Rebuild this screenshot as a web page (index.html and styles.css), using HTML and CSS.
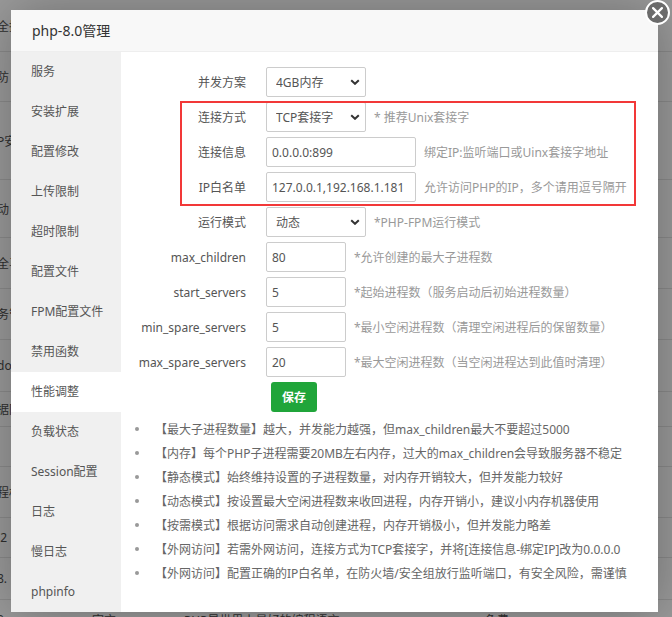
FILE: index.html
```html
<!DOCTYPE html>
<html lang="zh-CN">
<head>
<meta charset="utf-8">
<title>php-8.0管理</title>
<link rel="stylesheet" href="styles.css">
</head>
<body>
<div class="page">
  <div class="bg-row"><span class="c1">全捷</span><span></span><span></span><span></span></div>
  <div class="bg-row"><span class="c1">防</span><span></span><span></span><span></span></div>
  <div class="bg-row"><span class="c1">P安</span><span></span><span></span><span></span></div>
  <div class="bg-row"><span class="c1">动</span><span></span><span></span><span></span></div>
  <div class="bg-row"><span class="c1">全马</span><span></span><span></span><span></span></div>
  <div class="bg-row"><span class="c1">务管</span><span></span><span></span><span></span></div>
  <div class="bg-row"><span class="c1">do</span><span></span><span></span><span></span></div>
  <div class="bg-row"><span class="c1">据同</span><span></span><span></span><span></span></div>
  <div class="bg-row"><span class="c1"></span><span></span><span></span><span></span></div>
  <div class="bg-row"><span class="c1">程权</span><span></span><span></span><span></span></div>
  <div class="bg-row"><span class="c1">.2</span><span></span><span></span><span></span></div>
  <div class="bg-row"><span class="c1">8.</span><span></span><span></span><span></span></div>
  <div class="bg-row"><span class="c1">0</span><span>官方</span><span>PHP是世界上最好的编程语言</span><span>免费</span></div>
</div>

<div class="layer">
  <div class="layer-title">php-8.0管理</div>
  <a class="layer-close" href="#" aria-label="关闭">
    <svg viewBox="0 0 10 10" width="11" height="11"><path d="M1 1 L9 9 M9 1 L1 9" stroke="#fff" stroke-width="2" stroke-linecap="round" fill="none"/></svg>
  </a>
  <div class="layer-body">
    <div class="menu">
      <p>服务</p>
      <p>安装扩展</p>
      <p>配置修改</p>
      <p>上传限制</p>
      <p>超时限制</p>
      <p>配置文件</p>
      <p>FPM配置文件</p>
      <p>禁用函数</p>
      <p class="active">性能调整</p>
      <p>负载状态</p>
      <p>Session配置</p>
      <p>日志</p>
      <p>慢日志</p>
      <p>phpinfo</p>
    </div>
    <div class="content">
      <div class="row">
        <span class="label">并发方案</span>
        <div class="select-wrap">
          <select><option>4GB内存</option></select>
          <svg class="chev" viewBox="0 0 10 6" width="10" height="6"><path d="M1.2 1.2 L5 4.8 L8.8 1.2" stroke="#333" stroke-width="2" fill="none"/></svg>
        </div>
      </div>
      <div class="row">
        <span class="label">连接方式</span>
        <div class="select-wrap">
          <select><option>TCP套接字</option></select>
          <svg class="chev" viewBox="0 0 10 6" width="10" height="6"><path d="M1.2 1.2 L5 4.8 L8.8 1.2" stroke="#333" stroke-width="2" fill="none"/></svg>
        </div>
        <span class="hint">* 推荐Unix套接字</span>
      </div>
      <div class="row">
        <span class="label">连接信息</span>
        <input class="text w150" type="text" value="0.0.0.0:899">
        <span class="hint">绑定IP:监听端口或Uinx套接字地址</span>
      </div>
      <div class="row">
        <span class="label">IP白名单</span>
        <input class="text w150" type="text" value="127.0.0.1,192.168.1.181">
        <span class="hint">允许访问PHP的IP，多个请用逗号隔开</span>
      </div>
      <div class="row">
        <span class="label">运行模式</span>
        <div class="select-wrap">
          <select><option>动态</option></select>
          <svg class="chev" viewBox="0 0 10 6" width="10" height="6"><path d="M1.2 1.2 L5 4.8 L8.8 1.2" stroke="#333" stroke-width="2" fill="none"/></svg>
        </div>
        <span class="hint">*PHP-FPM运行模式</span>
      </div>
      <div class="row">
        <span class="label">max_children</span>
        <input class="text w80" type="text" value="80">
        <span class="hint">*允许创建的最大子进程数</span>
      </div>
      <div class="row">
        <span class="label">start_servers</span>
        <input class="text w80" type="text" value="5">
        <span class="hint">*起始进程数（服务启动后初始进程数量）</span>
      </div>
      <div class="row">
        <span class="label">min_spare_servers</span>
        <input class="text w80" type="text" value="5">
        <span class="hint">*最小空闲进程数（清理空闲进程后的保留数量）</span>
      </div>
      <div class="row">
        <span class="label">max_spare_servers</span>
        <input class="text w80" type="text" value="20">
        <span class="hint">*最大空闲进程数（当空闲进程达到此值时清理）</span>
      </div>
      <div class="btn-row">
        <button class="btn" type="button">保存</button>
      </div>
      <ul class="tips">
        <li>【最大子进程数量】越大，并发能力越强，但max_children最大不要超过5000</li>
        <li>【内存】每个PHP子进程需要20MB左右内存，过大的max_children会导致服务器不稳定</li>
        <li>【静态模式】始终维持设置的子进程数量，对内存开销较大，但并发能力较好</li>
        <li>【动态模式】按设置最大空闲进程数来收回进程，内存开销小，建议小内存机器使用</li>
        <li>【按需模式】根据访问需求自动创建进程，内存开销极小，但并发能力略差</li>
        <li>【外网访问】若需外网访问，连接方式为TCP套接字，并将[连接信息-绑定IP]改为0.0.0.0</li>
        <li>【外网访问】配置正确的IP白名单，在防火墙/安全组放行监听端口，有安全风险，需谨慎</li>
      </ul>
    </div>
  </div>
</div>

<div class="mark"></div>
</body>
</html>
```

FILE: styles.css
```css
* {
  box-sizing: border-box;
}

html, body {
  margin: 0;
  padding: 0;
}

body {
  width: 672px;
  height: 617px;
  overflow: hidden;
  position: relative;
  background: #9b9b9b;
  font-family: "Noto Sans", "Noto Sans CJK SC", sans-serif;
  font-size: 12px;
}

/* dimmed page behind the dialog */
.page {
  width: 672px;
}

.bg-row {
  display: grid;
  grid-template-columns: 92px 92px 301px 1fr;
  align-items: center;
  border-bottom: 1px solid #8b8b8b;
  color: #2f2f2f;
  font-size: 12px;
  white-space: nowrap;
}

.bg-row:nth-child(1) { height: 52px; }
.bg-row:nth-child(2) { height: 50px; }
.bg-row:nth-child(3) { height: 78px; }
.bg-row:nth-child(4) { height: 58px; }
.bg-row:nth-child(5) { height: 51px; }
.bg-row:nth-child(6) { height: 51px; }
.bg-row:nth-child(7) { height: 52px; }
.bg-row:nth-child(8) { height: 35px; }
.bg-row:nth-child(9) { height: 40px; }
.bg-row:nth-child(10) { height: 51px; }
.bg-row:nth-child(11) { height: 40px; }
.bg-row:nth-child(12) { height: 42px; }
.bg-row:nth-child(13) { height: 40px; }

.c1 {
  width: 11px;
  overflow: hidden;
  text-indent: -3px;
}

/* dialog */
.layer {
  position: absolute;
  left: 11px;
  top: 10px;
  width: 647px;
  height: 602px;
  background: #fff;
  box-shadow: 1px 1px 50px rgba(0, 0, 0, 0.3);
  display: flex;
  flex-direction: column;
}

.layer-title {
  height: 42px;
  line-height: 41px;
  padding-left: 21px;
  background: #f8f8f8;
  border-bottom: 1px solid #eee;
  color: #333;
  font-size: 14px;
}

.layer-close {
  position: absolute;
  right: -12px;
  top: -10px;
  width: 25px;
  height: 25px;
  border-radius: 50%;
  background: #6b6b6b;
  border: 2px solid #fff;
  display: flex;
  align-items: center;
  justify-content: center;
}

.layer-body {
  flex: 1;
  display: flex;
  min-height: 0;
}

.menu {
  width: 110px;
  background: #f0f0f0;
}

.menu p {
  margin: 0;
  height: 40px;
  line-height: 40px;
  padding-left: 20px;
  color: #555;
  white-space: nowrap;
}

.menu p.active {
  background: #fff;
}

.content {
  flex: 1;
  padding: 15px 0 0 15px;
}

.row {
  display: flex;
  align-items: center;
  height: 30px;
  margin-bottom: 5px;
  white-space: nowrap;
}

.label {
  width: 130px;
  padding-right: 20px;
  text-align: right;
  color: #555;
  flex: none;
}

.select-wrap {
  position: relative;
  width: 100px;
  height: 30px;
  flex: none;
}

.select-wrap select {
  -webkit-appearance: none;
  appearance: none;
  width: 100%;
  height: 100%;
  border: 1px solid #ccc;
  border-radius: 2px;
  padding: 0 0 0 9px;
  background: #fff;
  color: #555;
  font: inherit;
}

.chev {
  position: absolute;
  right: 6px;
  top: 12px;
  pointer-events: none;
}

.text {
  height: 30px;
  border: 1px solid #ccc;
  border-radius: 2px;
  padding: 0 5px;
  color: #555;
  font: inherit;
  flex: none;
}

.w150 { width: 150px; }
.w80 { width: 80px; }

.hint {
  margin-left: 8px;
  color: #999;
}

.btn-row {
  height: 30px;
  padding-left: 135px;
}

.btn {
  width: 46px;
  height: 30px;
  border: 0;
  border-radius: 3px;
  background: #20a53a;
  color: #fff;
  font: inherit;
  font-weight: bold;
  padding: 0;
}

.tips {
  list-style: none;
  margin: 5px 0 0 0;
  padding: 0;
}

.tips li {
  display: flex;
  align-items: center;
  height: 24px;
  color: #666;
  white-space: nowrap;
}

.tips li::before {
  content: "";
  width: 4px;
  height: 4px;
  border-radius: 50%;
  background: #999;
  margin-left: -1px;
  margin-right: 16px;
  flex: none;
}

/* red annotation box */
.mark {
  position: absolute;
  left: 180px;
  top: 101px;
  width: 456px;
  height: 105px;
  border: 2px solid #f23838;
}
```
